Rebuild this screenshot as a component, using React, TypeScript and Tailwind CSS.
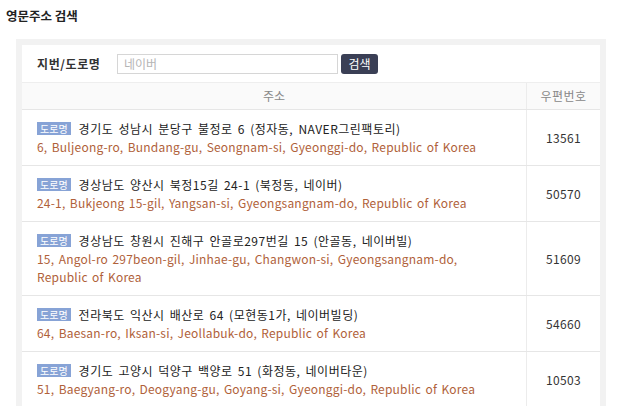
import React from "react";

type Row = { ko: string; en: string; zip: string };

const rows: Row[] = [
  {
    ko: "경기도 성남시 분당구 불정로 6 (정자동, NAVER그린팩토리)",
    en: "6, Buljeong-ro, Bundang-gu, Seongnam-si, Gyeonggi-do, Republic of Korea",
    zip: "13561",
  },
  {
    ko: "경상남도 양산시 북정15길 24-1 (북정동, 네이버)",
    en: "24-1, Bukjeong 15-gil, Yangsan-si, Gyeongsangnam-do, Republic of Korea",
    zip: "50570",
  },
  {
    ko: "경상남도 창원시 진해구 안골로297번길 15 (안골동, 네이버빌)",
    en: "15, Angol-ro 297beon-gil, Jinhae-gu, Changwon-si, Gyeongsangnam-do, Republic of Korea",
    zip: "51609",
  },
  {
    ko: "전라북도 익산시 배산로 64 (모현동1가, 네이버빌딩)",
    en: "64, Baesan-ro, Iksan-si, Jeollabuk-do, Republic of Korea",
    zip: "54660",
  },
  {
    ko: "경기도 고양시 덕양구 백양로 51 (화정동, 네이버타운)",
    en: "51, Baegyang-ro, Deogyang-gu, Goyang-si, Gyeonggi-do, Republic of Korea",
    zip: "10503",
  },
];

export default function App() {
  return (
    <div
      className="w-[617px] h-[406px] overflow-hidden bg-white text-[12px] text-[#333]"
      style={{ fontFamily: '"Noto Sans CJK KR", "Noto Sans", sans-serif' }}
    >
      <div className="pl-[6px] pt-[6px] h-[39px] text-[12.5px] font-bold text-[#222] leading-[20px]">
        영문주소 검색
      </div>
      <div className="ml-[16px] w-[590px] bg-[#f2f2f2] p-[6px] pb-0">
        <div className="bg-white">
          <div className="flex items-center h-[38px] pl-[15px] border-b border-[#eeeeee]">
            <span className="w-[80px] font-bold text-[#333] text-[12px] tracking-[0.6px]">지번/도로명</span>
            <div className="w-[221px] h-[20px] border border-[#d6d6d6] flex items-center pl-[6px] text-[#b5b5b5] text-[12px]">
              네이버
            </div>
            <button className="ml-[3px] h-[20px] w-[37px] rounded-[3px] bg-[#3a3f55] text-white text-[12px] leading-[20px]">
              검색
            </button>
          </div>
          <div className="flex h-[27px] bg-[#fafafa] border-b border-[#e6e6e6] text-[#888]">
            <div className="w-[505px] flex items-center justify-center border-r border-[#ececec]">주소</div>
            <div className="flex-1 flex items-center justify-center tracking-[0.5px]">우편번호</div>
          </div>
          {rows.map((r) => (
            <div key={r.zip} className="flex border-b border-[#e6e6e6]">
              <div className="w-[505px] pl-[15px] pr-[20px] pt-[10px] pb-[9px] leading-[18px] border-r border-[#ececec]">
                <div className="text-[#222] tracking-[0.5px] [word-spacing:2px]">
                  <span className="inline-block align-[1px] h-[13px] leading-[13px] px-[3px] mr-[8px] bg-[#87a3d6] text-white text-[10px] tracking-normal [word-spacing:0]">
                    도로명
                  </span>
                  {r.ko}
                </div>
                <div className="text-[#b0613a] tracking-[0.2px] [word-spacing:1.5px]">{r.en}</div>
              </div>
              <div className="flex-1 flex items-center justify-center text-[#333] tracking-[0.3px]">{r.zip}</div>
            </div>
          ))}
        </div>
      </div>
    </div>
  );
}
